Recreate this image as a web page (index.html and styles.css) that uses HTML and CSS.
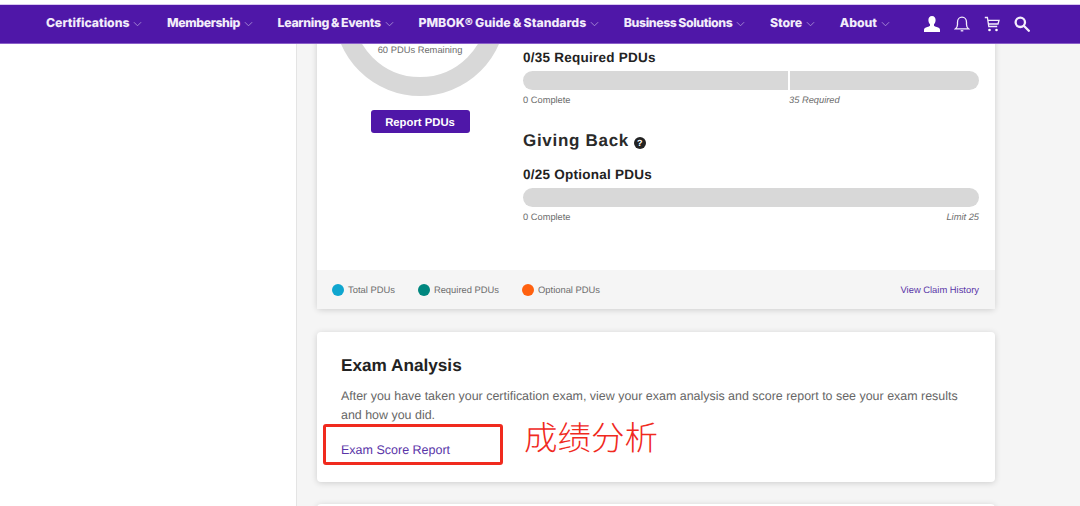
FILE: index.html
```html
<!DOCTYPE html>
<html lang="en">
<head>
<meta charset="utf-8">
<title>PDU Dashboard</title>
<link rel="stylesheet" href="styles.css">
</head>
<body>
<div class="page">
  <header class="topbar">
    <nav class="nav">
      <a class="nav-item">Certifications<svg class="chev" viewBox="0 0 10 6"><path d="M1 1l4 4 4-4"/></svg></a>
      <a class="nav-item nav-tight">Membership<svg class="chev" viewBox="0 0 10 6"><path d="M1 1l4 4 4-4"/></svg></a>
      <a class="nav-item nav-snug">Learning &amp; Events<svg class="chev" viewBox="0 0 10 6"><path d="M1 1l4 4 4-4"/></svg></a>
      <a class="nav-item nav-wide">PMBOK® Guide &amp; Standards<svg class="chev" viewBox="0 0 10 6"><path d="M1 1l4 4 4-4"/></svg></a>
      <a class="nav-item nav-tight">Business Solutions<svg class="chev" viewBox="0 0 10 6"><path d="M1 1l4 4 4-4"/></svg></a>
      <a class="nav-item">Store<svg class="chev" viewBox="0 0 10 6"><path d="M1 1l4 4 4-4"/></svg></a>
      <a class="nav-item">About<svg class="chev" viewBox="0 0 10 6"><path d="M1 1l4 4 4-4"/></svg></a>
    </nav>
    <div class="tools">
      <svg class="tool" viewBox="0 0 16 16"><path class="fill" d="M8 0c2.400 0 3.600 1.800 3.600 4 0 1.700-.7 3.300-1.600 4.200v1.300c0 .6 1.200 1 2.800 1.600 1.700.6 3.200 1.200 3.200 2.700V16H0v-2.200c0-1.500 1.500-2.100 3.200-2.700C4.800 10.500 6 10.100 6 9.500V8.200C5.100 7.300 4.400 5.700 4.400 4 4.400 1.800 5.600 0 8 0z"/></svg>
      <svg class="tool" viewBox="0 0 16 16"><path class="line" d="M1.500 12.800c1.200-1 2-2 2-4.300V6.200C3.500 3.400 5.300 1.200 8 1.200s4.500 2.200 4.500 5v2.300c0 2.300.8 3.300 2 4.300z"/><path class="line" d="M6.700 14.800h2.600"/></svg>
      <svg class="tool" viewBox="0 0 16 16"><path class="line" d="M.8 1.500h2.600l1.400 9h8.400M4 4.300h11l-1 3.700H4.500"/><circle class="fill" cx="5.500" cy="14" r="1.300"/><circle class="fill" cx="12.500" cy="14" r="1.300"/></svg>
      <svg class="tool" viewBox="0 0 16 16"><circle class="line thick" cx="6.300" cy="6.300" r="4.700"/><path class="line thick" d="M9.800 9.800l5 5"/></svg>
    </div>
  </header>
  <div class="layout">
    <aside class="sidebar"></aside>
    <main class="main">
      <section class="card pdu-card">
        <div class="pdu-body">
          <div class="ring-col">
            <div class="ring">
              <svg class="ring-svg" viewBox="0 0 172 172"><circle cx="86" cy="86" r="76.500"/></svg>
              <span class="ring-label">60 PDUs Remaining</span>
            </div>
            <a class="report-btn">Report PDUs</a>
          </div>
          <div class="progress-col">
            <h4 class="bar-title">0/35 Required PDUs</h4>
            <div class="bar"><span class="tick"></span></div>
            <div class="bar-notes"><span>0 Complete</span><em class="note-mid">35 Required</em></div>
            <h3 class="section-title">Giving Back <svg class="help" viewBox="0 0 12 12"><circle cx="6" cy="6" r="6"/><text x="6" y="9.200" text-anchor="middle">?</text></svg></h3>
            <h4 class="bar-title">0/25 Optional PDUs</h4>
            <div class="bar"></div>
            <div class="bar-notes split"><span>0 Complete</span><em>Limit 25</em></div>
          </div>
        </div>
        <footer class="legend">
          <span class="legend-item"><i class="dot dot-total"></i>Total PDUs</span>
          <span class="legend-item"><i class="dot dot-required"></i>Required PDUs</span>
          <span class="legend-item"><i class="dot dot-optional"></i>Optional PDUs</span>
          <a class="claim-link">View Claim History</a>
        </footer>
      </section>
      <section class="card exam-card">
        <h2 class="exam-title">Exam Analysis</h2>
        <p class="exam-text">After you have taken your certification exam, view your exam analysis and score report to see your exam results and how you did.</p>
        <a class="exam-link">Exam Score Report</a>
        <span class="red-box"></span>
        <span class="red-note">成绩分析</span>
      </section>
      <section class="card next-card"></section>
    </main>
  </div>
</div>
</body>
</html>
```
FILE: styles.css
```css
* { box-sizing: border-box; }
html, body { margin: 0; padding: 0; }
body {
  font-family: "Liberation Sans", Arial, sans-serif;
  background: #fff;
  color: #222;
  text-rendering: geometricPrecision;
}
.page {
  width: 1080px;
  height: 506px;
  overflow: hidden;
  display: flex;
  flex-direction: column;
  padding-top: 4px;
}
.topbar {
  position: relative;
  z-index: 2;
  flex: none;
  height: 40px;
  background: #4f17a8;
  border-top: 1px solid #d9c8f0;
  border-bottom: 1px solid #8a5fc9;
  display: flex;
  align-items: center;
  padding: 0 50px 3px 46px;
}
.nav { display: flex; gap: 24.600px; }
.nav-item {
  display: flex;
  align-items: center;
  gap: 4px;
  color: #f2ecfa;
  font-family: Inter, "Liberation Sans", sans-serif;
  font-size: 12.300px;
  font-weight: 800;
  letter-spacing: -.05px;
  word-spacing: -.5px;
  white-space: nowrap;
}
.nav-tight { letter-spacing: -.4px; }
.nav-snug { letter-spacing: -.3px; }
.nav-wide { letter-spacing: 0; }
.chev { width: 9px; height: 6px; margin-top: 3px; fill: none; stroke: #a98fd6; stroke-width: 1; }
.tools { display: flex; gap: 14px; margin-left: auto; margin-top: 3px; }
.tool { width: 16px; height: 16px; display: block; }
.fill { fill: #fff; }
.line { fill: none; stroke: #f4eefc; stroke-width: 1.300; }
.thick { stroke-width: 2.300; stroke-linecap: round; }

.layout { flex: 1; display: flex; min-height: 0; }
.sidebar { flex: none; width: 297px; background: #fff; border-right: 1px solid #e4e4e4; }
.main {
  flex: 1;
  min-width: 0;
  background: #f5f5f5;
  padding-left: 20px;
  padding-right: 85px;
  overflow: hidden;
}
.card {
  background: #fff;
  border-radius: 4px;
  box-shadow: 0 1px 6px rgba(0, 0, 0, .16);
}
.pdu-card { margin-top: -100px; height: 365px; display: flex; flex-direction: column; }
.pdu-body { flex: 1; display: flex; min-height: 0; }
.ring-col {
  flex: none;
  width: 206px;
  display: flex;
  flex-direction: column;
  align-items: center;
}
.ring { position: relative; width: 172px; height: 172px; flex: none; margin-top: -20px; }
.ring-svg { display: block; width: 172px; height: 172px; }
.ring-svg circle { fill: none; stroke: #d8d8d8; stroke-width: 19; }
.ring-label {
  position: absolute;
  left: 0;
  right: 0;
  top: 121px;
  text-align: center;
  color: #6d6d6d;
  font-size: 9.350px;
}
.report-btn {
  margin-top: 14px;
  width: 99px;
  height: 23px;
  padding-top: 2px;
  border-radius: 3px;
  background: #4f17a8;
  color: #fff;
  font-size: 11.300px;
  font-weight: 700;
  display: flex;
  align-items: center;
  justify-content: center;
}
.progress-col { flex: 1; min-width: 0; padding: 104px 16px 0 0; }
.bar-title {
  margin: 0 0 3px;
  font-size: 13.500px;
  line-height: 20px;
  font-weight: 700;
  letter-spacing: .25px;
  color: #222;
}
.bar { position: relative; height: 19px; border-radius: 10px; background: #d8d8d8; }
.tick { position: absolute; left: 58.200%; top: 0; bottom: 0; width: 2px; background: #fff; }
.bar-notes {
  display: flex;
  margin-top: 3px;
  font-size: 9.300px;
  line-height: 14px;
  color: #6d6d6d;
}
.split { justify-content: space-between; }
.note-mid { position: absolute; margin-left: 266px; }
.section-title {
  margin: 21px 0 11px;
  font-size: 17px;
  line-height: 26px;
  font-weight: 700;
  letter-spacing: .7px;
  color: #2a2a2a;
}
.help { width: 12px; height: 12px; vertical-align: -3px; margin-left: 0; }
.help circle { fill: #222; }
.help text { fill: #fff; font-size: 9px; font-weight: 700; }
.legend {
  flex: none;
  height: 39px;
  background: #f5f5f5;
  display: flex;
  align-items: center;
  padding: 0 16px 0 15px;
  font-size: 9.400px;
  color: #6d6d6d;
}
.legend-item { display: flex; align-items: center; gap: 4px; margin-right: 23px; line-height: 14px; }
.dot { width: 12px; height: 12px; border-radius: 50%; display: block; }
.dot-total { background: #0fa6cf; }
.dot-required { background: #00877f; }
.dot-optional { background: #ff610f; }
.claim-link { margin-left: auto; padding-bottom: 1px; color: #5a35a8; }
.exam-card { position: relative; margin-top: 23px; height: 150px; padding: 22px 24px; }
.exam-title { margin: 0 0 11px; font-size: 17.200px; line-height: 22px; font-weight: 700; color: #222; }
.exam-text { margin: 0 0 17px; font-size: 12.440px; line-height: 19px; color: #666; }
.exam-link { color: #5a35a8; font-size: 12.500px; line-height: 16px; display: block; }
.red-box {
  position: absolute;
  left: 6px;
  top: 92px;
  width: 180px;
  height: 41px;
  border: 3px solid #f02a1e;
  border-radius: 3px;
}
.red-note {
  position: absolute;
  left: 207px;
  top: 87px;
  font-family: "Noto Sans CJK SC", sans-serif;
  font-size: 33.500px;
  line-height: 34px;
  font-weight: 300;
  color: #f02a1e;
  white-space: nowrap;
}
.next-card { margin-top: 22px; height: 40px; }
```
